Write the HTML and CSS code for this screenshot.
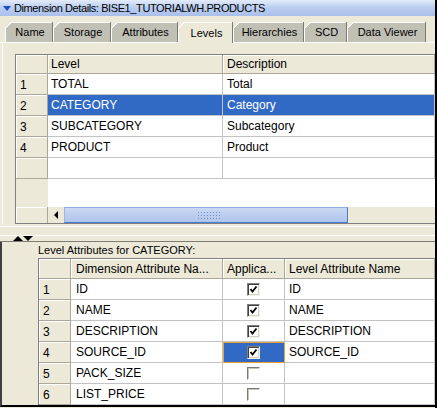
FILE: index.html
```html
<!DOCTYPE html>
<html lang="en">
<head>
  <meta charset="UTF-8" />
  <title>Dimension Details</title>
  <link rel="stylesheet" href="styles.css">
</head>
<body>
  <div class="window">
    <div class="title"><span class="title-arrow"></span>Dimension Details: BISE1_TUTORIALWH.PRODUCTS</div>

    <div class="tabs">
      <div class="tab w-name">Name</div>
      <div class="tab w-storage">Storage</div>
      <div class="tab w-attrs">Attributes</div>
      <div class="tab w-levels active">Levels</div>
      <div class="tab w-hier">Hierarchies</div>
      <div class="tab w-scd">SCD</div>
      <div class="tab w-viewer">Data Viewer</div>
    </div>

    <div class="pane-top">
      <div class="grid levels">
        <div class="row head">
          <div class="cell rh"></div>
          <div class="cell hc c-level">Level</div>
          <div class="cell hc c-desc">Description</div>
        </div>
        <div class="row">
          <div class="cell rh">1</div>
          <div class="cell c-level">TOTAL</div>
          <div class="cell c-desc">Total</div>
        </div>
        <div class="row">
          <div class="cell rh">2</div>
          <div class="cell c-level sel">CATEGORY</div>
          <div class="cell c-desc sel">Category</div>
        </div>
        <div class="row">
          <div class="cell rh">3</div>
          <div class="cell c-level">SUBCATEGORY</div>
          <div class="cell c-desc">Subcategory</div>
        </div>
        <div class="row">
          <div class="cell rh">4</div>
          <div class="cell c-level">PRODUCT</div>
          <div class="cell c-desc">Product</div>
        </div>
        <div class="row">
          <div class="cell rh"></div>
          <div class="cell c-level"></div>
          <div class="cell c-desc"></div>
        </div>
        <div class="filler">
          <div class="filler-rh"></div>
        </div>
        <div class="hscroll">
          <div class="corner"></div>
          <div class="arrow-btn"><span class="arrow-left"></span></div>
          <div class="thumb"><span class="grip"></span></div>
          <div class="track"></div>
        </div>
      </div>
    </div>

    <div class="splitter">
      <span class="tri-up"></span><span class="tri-down"></span>
    </div>

    <div class="pane-bottom">
      <div class="caption">Level Attributes for CATEGORY:</div>
      <div class="grid attrs">
        <div class="row head2">
          <div class="cell rh"></div>
          <div class="cell hc a-name">Dimension Attribute Na...</div>
          <div class="cell hc a-app">Applica...</div>
          <div class="cell hc a-lvl">Level Attribute Name</div>
        </div>
        <div class="row">
          <div class="cell rh">1</div>
          <div class="cell a-name">ID</div>
          <div class="cell a-app"><span class="cb"><svg viewBox="0 0 9 9"><polyline points="1.5,4 3.5,6.5 7.5,1.5" /></svg></span></div>
          <div class="cell a-lvl">ID</div>
        </div>
        <div class="row">
          <div class="cell rh">2</div>
          <div class="cell a-name">NAME</div>
          <div class="cell a-app"><span class="cb"><svg viewBox="0 0 9 9"><polyline points="1.5,4 3.5,6.5 7.5,1.5" /></svg></span></div>
          <div class="cell a-lvl">NAME</div>
        </div>
        <div class="row">
          <div class="cell rh">3</div>
          <div class="cell a-name">DESCRIPTION</div>
          <div class="cell a-app"><span class="cb"><svg viewBox="0 0 9 9"><polyline points="1.5,4 3.5,6.5 7.5,1.5" /></svg></span></div>
          <div class="cell a-lvl">DESCRIPTION</div>
        </div>
        <div class="row">
          <div class="cell rh">4</div>
          <div class="cell a-name">SOURCE_ID</div>
          <div class="cell a-app focus"><span class="cb"><svg viewBox="0 0 9 9"><polyline points="1.5,4 3.5,6.5 7.5,1.5" /></svg></span></div>
          <div class="cell a-lvl">SOURCE_ID</div>
        </div>
        <div class="row">
          <div class="cell rh">5</div>
          <div class="cell a-name">PACK_SIZE</div>
          <div class="cell a-app"><span class="cb off"></span></div>
          <div class="cell a-lvl"></div>
        </div>
        <div class="row">
          <div class="cell rh">6</div>
          <div class="cell a-name">LIST_PRICE</div>
          <div class="cell a-app"><span class="cb off"></span></div>
          <div class="cell a-lvl"></div>
        </div>
      </div>
    </div>
  </div>
</body>
</html>
```

FILE: styles.css
```css
* {
  box-sizing: border-box;
}

html,
body {
  margin: 0;
  padding: 0;
  background: #ece9d8;
}

body {
  font-family: "Liberation Sans", Arial, sans-serif;
  font-size: 12px;
  color: #000;
}

.window {
  width: 437px;
  height: 408px;
  overflow: hidden;
  background: #ece9d8;
  border-right: 2px solid #000;
}

/* title bar */
.title {
  height: 16px;
  display: flex;
  align-items: center;
  padding-left: 3px;
  font-size: 11px;
  letter-spacing: -0.4px;
  background: linear-gradient(#e3ebf9, #bccff1 45%, #a9bfea);
  white-space: nowrap;
}

.title-arrow {
  width: 0;
  height: 0;
  border-left: 4px solid transparent;
  border-right: 4px solid transparent;
  border-top: 5px solid #1d4fc0;
  margin-right: 3px;
}

/* tabs */
.tabs {
  display: flex;
  align-items: flex-start;
  height: 21px;
  margin-top: 6px;
  padding-left: 5px;
  font-size: 11px;
  border-bottom: 1px solid #fff;
}

.tab {
  position: relative;
  height: 20px;
  display: flex;
  align-items: center;
  justify-content: center;
  padding-left: 3px;
  background: #c1c0b5;
  border-right: 1px solid #7a7a72;
  box-shadow: inset 1px 1px #fff;
  clip-path: polygon(0 6px, 6px 0, 100% 0, 100% 100%, 0 100%);
  white-space: nowrap;
  flex: none;
}

.tab::before {
  content: "";
  position: absolute;
  left: 0;
  top: 0;
  width: 8px;
  height: 8px;
  background: linear-gradient(135deg, transparent 4.2px, #fff 4.2px, #fff 5.4px, transparent 5.4px);
}

.tab.active {
  height: 21px;
  background: #ece9d8;
}

.w-name { width: 48px; }
.w-storage { width: 58px; }
.w-attrs { width: 67px; }
.w-levels { width: 55px; }
.w-hier { width: 71px; }
.w-scd { width: 43px; }
.w-viewer { width: 79px; }

/* grids */
.pane-top {
  margin-left: 2px;
  border-left: 1px solid #fff;
  padding: 11px 0 0 12px;
}

.grid {
  background: #fff;
  border-left: 1px solid #808080;
  border-top: 1px solid #808080;
  overflow: hidden;
}

.grid.levels {
  width: 420px;
}

.row {
  display: flex;
  height: 21px;
}

.row.head {
  height: 19px;
}

.row.head2 {
  height: 20px;
}

.cell {
  flex: none;
  display: flex;
  align-items: center;
  padding-left: 3px;
  border-right: 1px solid #c3c3c3;
  border-bottom: 1px solid #c3c3c3;
  white-space: nowrap;
  overflow: hidden;
}

.rh {
  width: 32px;
  padding: 2px 0 0 4px;
  background: #ece9d8;
  border-color: #aca899;
  box-shadow: inset 1px 1px #fff;
}

.hc {
  background: #ece9d8;
  border-color: #aca899;
  box-shadow: inset 1px 1px #fff;
}

.c-level { width: 175px; }
.c-desc { width: 212px; padding-left: 4px; }

.sel {
  background: #316ac5;
  color: #fff;
}

.filler {
  display: flex;
  height: 28px;
}

.filler-rh {
  width: 32px;
  background: #ece9d8;
}

/* horizontal scrollbar */
.hscroll {
  display: flex;
  height: 17px;
  background: #ece9d8;
  border-bottom: 1px solid #808080;
}

.corner {
  width: 32px;
  box-shadow: inset 1px 1px #fff;
  border-right: 1px solid #aca899;
}

.arrow-btn {
  width: 16px;
  display: flex;
  align-items: center;
  justify-content: center;
  background: #ece9d8;
}

.arrow-left {
  width: 0;
  height: 0;
  border-top: 4px solid transparent;
  border-bottom: 4px solid transparent;
  border-right: 4px solid #000;
}

.thumb {
  width: 284px;
  display: flex;
  align-items: center;
  justify-content: center;
  padding-left: 6px;
  background: linear-gradient(#cad9f2, #bccdee 50%, #b1c5eb);
  border: 1px solid #4a78d0;
  border-left-color: #9bb4e4;
  border-top-color: #8fabe2;
}

.grip {
  width: 24px;
  height: 9px;
  background-image: radial-gradient(circle, #6e8fd6 0.7px, transparent 0.9px);
  background-size: 3px 3px;
}

.track {
  flex: 1;
  background: #ece9d8;
}

/* splitter */
.splitter {
  display: flex;
  align-items: flex-end;
  height: 18px;
  padding-left: 13px;
  border-bottom: 1px solid #7e7c72;
  background: linear-gradient(transparent 2px, #fff 2px, #fff 3px, transparent 3px, transparent 11px, #fff 11px, #fff 12px, transparent 12px);
}

.tri-up,
.tri-down {
  width: 0;
  height: 0;
  border-left: 5px solid transparent;
  border-right: 5px solid transparent;
}

.tri-up {
  border-bottom: 5px solid #000;
}

.tri-down {
  border-top: 5px solid #000;
}

/* lower pane */
.pane-bottom {
  height: 165px;
  padding-left: 36px;
  border-left: 2px solid #404040;
  border-bottom: 2px solid #000;
}

.caption {
  height: 16px;
  line-height: 16px;
  font-size: 11px;
  white-space: nowrap;
}

.grid.attrs {
  width: 397px;
}

.a-name { width: 152px; padding-left: 5px; }
.a-app { width: 62px; justify-content: center; padding-left: 0; }
.a-lvl { width: 150px; padding-left: 4px; }

.hc.a-app {
  justify-content: flex-start;
  padding-left: 4px;
}

.focus {
  background: #316ac5;
  border-color: #f0a030;
  box-shadow: inset 1px 1px #f0a030;
}

.cb {
  width: 13px;
  height: 13px;
  background: #fff;
  border: 1px solid;
  border-color: #808080 #f2f1ea #f2f1ea #808080;
  box-shadow: inset 1px 1px #404040, inset -1px -1px #d4d0c8;
  display: flex;
  align-items: center;
  justify-content: center;
}

.cb svg {
  width: 9px;
  height: 9px;
  fill: none;
  stroke: #000;
  stroke-width: 1.8;
}

.cb.off {
  border-color: #7a7a7a #fff #fff #7a7a7a;
  box-shadow: inset 1px 1px #c8c5b8;
}
```
